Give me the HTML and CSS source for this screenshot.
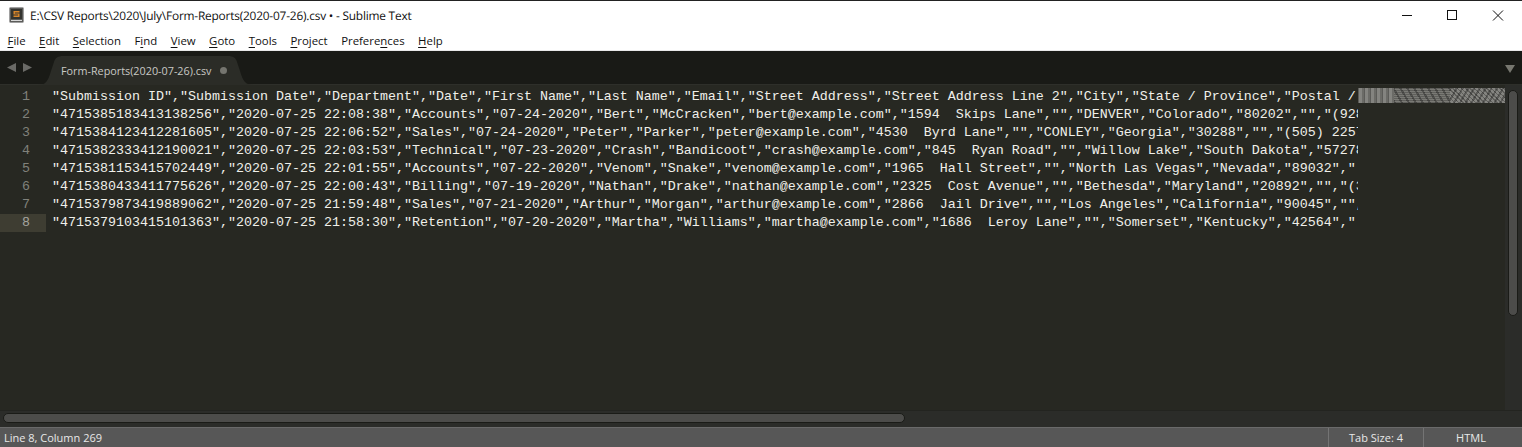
FILE: index.html
```html
<!DOCTYPE html>
<html lang="en">
<head>
<meta charset="utf-8">
<title>Sublime Text</title>
<link rel="stylesheet" href="styles.css">
</head>
<body>
<div class="window">
  <header class="titlebar">
    <svg class="appicon" width="15" height="16" viewBox="0 0 15 16"><rect x="0.5" y="0.5" width="14" height="15" rx="1" fill="#5c5c5a" stroke="#a0a0a0"/><rect x="2" y="2" width="11" height="10" fill="#33332f"/><path d="M4.5 4h6v1.6H5.9v1h4.6V10h-6V8.4h4.6v-1H4.5z" fill="#d9862a"/><rect x="2" y="13" width="11" height="1" fill="#d8d8d8"/></svg>
    <span class="title">E:\CSV Reports\2020\July\Form-Reports(2020-07-26).csv • - Sublime Text</span>
    <div class="winctl">
      <svg width="46" height="30" viewBox="0 0 46 30"><path d="M18 14.5h10" stroke="#111" fill="none"/></svg>
      <svg width="46" height="30" viewBox="0 0 46 30"><rect x="17.5" y="9.5" width="9" height="9" stroke="#111" fill="none"/></svg>
      <svg width="46" height="30" viewBox="0 0 46 30"><path d="M17 9.5l10 10M27 9.5l-10 10" stroke="#111" fill="none"/></svg>
    </div>
  </header>
  <nav class="menubar">
    <span><u>F</u>ile</span><span><u>E</u>dit</span><span><u>S</u>election</span><span>F<u>i</u>nd</span><span><u>V</u>iew</span><span><u>G</u>oto</span><span><u>T</u>ools</span><span><u>P</u>roject</span><span>Prefere<u>n</u>ces</span><span><u>H</u>elp</span>
  </nav>
  <div class="tabbar">
    <div class="arrows">
      <svg width="9" height="9" viewBox="0 0 9 9"><path d="M9 0v9L0 4.5z" fill="#6a6a66"/></svg>
      <svg width="9" height="9" viewBox="0 0 9 9"><path d="M0 0v9l9-4.5z" fill="#6a6a66"/></svg>
    </div>
    <div class="tab">
      <svg class="tabshape" width="216" height="29" viewBox="0 0 216 29"><path d="M0 29C8 29 10 25 13 15L16 6C17 2 20 0 25 0H190C195 0 198 2 199 6L202 15C205 25 207 29 216 29Z" fill="#2b2c27"/></svg>
      <span class="tabname">Form-Reports(2020-07-26).csv</span>
      <i class="dirty"></i>
    </div>
    <svg class="tabmenu" width="10" height="8" viewBox="0 0 10 8"><path d="M0 0h10L5 8z" fill="#77776f"/></svg>
  </div>
  <div class="body">
    <div class="editorwrap">
      <main class="editor">
        <div class="gutter">
          <div>1</div><div>2</div><div>3</div><div>4</div><div>5</div><div>6</div><div>7</div><div class="cur">8</div>
        </div>
        <div class="code">
          <div>"Submission ID","Submission Date","Department","Date","First Name","Last Name","Email","Street Address","Street Address Line 2","City","State / Province","Postal / </div>
          <div>"4715385183413138256","2020-07-25 22:08:38","Accounts","07-24-2020","Bert","McCracken","bert@example.com","1594  Skips Lane","","DENVER","Colorado","80202","","(928</div>
          <div>"4715384123412281605","2020-07-25 22:06:52","Sales","07-24-2020","Peter","Parker","peter@example.com","4530  Byrd Lane","","CONLEY","Georgia","30288","","(505) 2257</div>
          <div>"4715382333412190021","2020-07-25 22:03:53","Technical","07-23-2020","Crash","Bandicoot","crash@example.com","845  Ryan Road","","Willow Lake","South Dakota","57278</div>
          <div>"4715381153415702449","2020-07-25 22:01:55","Accounts","07-22-2020","Venom","Snake","venom@example.com","1965  Hall Street","","North Las Vegas","Nevada","89032","</div>
          <div>"4715380433411775626","2020-07-25 22:00:43","Billing","07-19-2020","Nathan","Drake","nathan@example.com","2325  Cost Avenue","","Bethesda","Maryland","20892","","(3</div>
          <div>"4715379873419889062","2020-07-25 21:59:48","Sales","07-21-2020","Arthur","Morgan","arthur@example.com","2866  Jail Drive","","Los Angeles","California","90045","",</div>
          <div>"4715379103415101363","2020-07-25 21:58:30","Retention","07-20-2020","Martha","Williams","martha@example.com","1686  Leroy Lane","","Somerset","Kentucky","42564","</div>
        </div>
        <div class="minimap">
          <div class="minitext"><i class="mini-a"></i><i class="mini-b"></i><i class="mini-c"></i></div>
        </div>
      </main>
      <div class="vscroll"><div class="vthumb"></div></div>
    </div>
    <div class="hscroll"><div class="hthumb"></div></div>
  </div>
  <footer class="status">
    <span class="pos">Line 8, Column 269</span>
    <span class="cell tabsize">Tab Size: 4</span>
    <span class="cell syntax">HTML</span>
  </footer>
</div>
</body>
</html>
```

FILE: styles.css
```css
* { box-sizing: border-box; }
html, body { margin: 0; padding: 0; height: 100%; overflow: hidden; }
body { font-family: "Open Sans", "Liberation Sans", sans-serif; background: #272822; }
.window { width: 1522px; height: 447px; display: flex; flex-direction: column; border-top: 1px solid #222; }
.titlebar { height: 30px; flex: none; display: flex; align-items: center; background: #fff; padding: 0 0 1px 9px; color: #111; font-size: 11.88px; }
.appicon { flex: none; margin: 0 6px 1px 0; }
.title { flex: 1; white-space: nowrap; text-rendering: geometricPrecision; letter-spacing: -0.2px; }
.winctl { display: flex; flex: none; align-self: flex-start; }
.winctl svg { display: block; }
.menubar { height: 20px; flex: none; display: flex; gap: 13.5px; align-items: center; background: #fff; padding: 0 0 1px 7.5px; color: #111; font-size: 11.4px; border-bottom: 1px solid #e8e8e8; }
.menubar u { text-underline-offset: 2px; }
.tabbar { height: 34px; flex: none; display: flex; align-items: flex-end; position: relative; background: #191a16; border-bottom: 1px solid #2e2f2a; }
.arrows { display: flex; gap: 7px; width: 38px; flex: none; padding: 0 0 12px 7px; }
.arrows svg { display: block; }
.tab { position: relative; width: 216px; height: 29px; margin-bottom: -1px; display: flex; align-items: center; color: #c9c9c5; font-size: 10.8px; padding: 0 0 0 23px; }
.tabshape { position: absolute; left: 0; top: 0; }
.tabname { position: relative; white-space: nowrap; }
.dirty { position: relative; width: 7px; height: 7px; border-radius: 50%; background: #75756f; margin-left: 9px; }
.tabmenu { position: absolute; right: 7px; top: 14px; }
.body { flex: 1; min-height: 0; display: flex; flex-direction: column; background: #2b2c29; }
.editorwrap { flex: none; height: 325px; display: flex; }
.editor { flex: 1; min-width: 0; display: flex; background: #272822; position: relative; overflow: hidden; padding-top: 3px; }
.gutter { width: 46px; flex: none; color: #80817b; font: 13.33px/18px "Liberation Mono", monospace; text-align: right; }
.gutter div { height: 18px; padding-right: 16px; }
.gutter .cur { background: #3e3d32; color: #a5a59f; }
.code { flex: 1; min-width: 0; overflow: hidden; padding-left: 6px; color: #f0f0ea; font: 13.33px/18px "Liberation Mono", monospace; }
.code div { height: 18px; white-space: pre; }
.minimap { width: 147px; flex: none; background: #272822; margin-top: -3px; padding-top: 3px; }
.minitext { height: 15px; display: flex; background-color: #7a7a75; }
.minitext i { display: block; height: 100%; }
.mini-a { width: 36px; background-image: repeating-linear-gradient(90deg, rgba(0,0,0,.25) 0 1px, rgba(255,255,255,.08) 1px 4px, rgba(0,0,0,.12) 4px 6px); }
.mini-b { width: 56px; background-image: repeating-linear-gradient(0deg, rgba(0,0,0,.22) 0 1px, transparent 1px 2px), repeating-linear-gradient(60deg, rgba(0,0,0,.3) 0 2px, transparent 2px 6px); }
.mini-c { flex: 1; background-image: repeating-linear-gradient(120deg, rgba(0,0,0,.3) 0 2px, transparent 2px 5px), repeating-linear-gradient(45deg, rgba(0,0,0,.22) 0 1px, rgba(255,255,255,.08) 1px 3px); }
.vscroll { width: 17px; flex: none; background: #2b2c29; padding: 5px 4px 0 3px; }
.vthumb { height: 226px; width: 10px; background: #4c4c4a; border: 1px solid #1a1b17; border-radius: 5px; }
.hscroll { flex: none; height: 17px; padding: 3px 0 0 3px; background: #2b2c29; box-shadow: inset 0 1px 0 #232420; }
.hthumb { width: 902px; height: 10px; background: #4c4c4a; border: 1px solid #1a1b17; border-radius: 5px; }
.status { height: 20px; flex: none; display: flex; align-items: center; background: #575757; border-top: 1px solid #6a6a6a; color: #e8e8e8; font-size: 11px; }
.pos { flex: 1; padding-left: 4px; }
.cell { height: 100%; display: flex; align-items: center; justify-content: center; border-left: 1px solid #747474; }
.tabsize { width: 95px; }
.syntax { width: 99px; padding-right: 4px; }
```
